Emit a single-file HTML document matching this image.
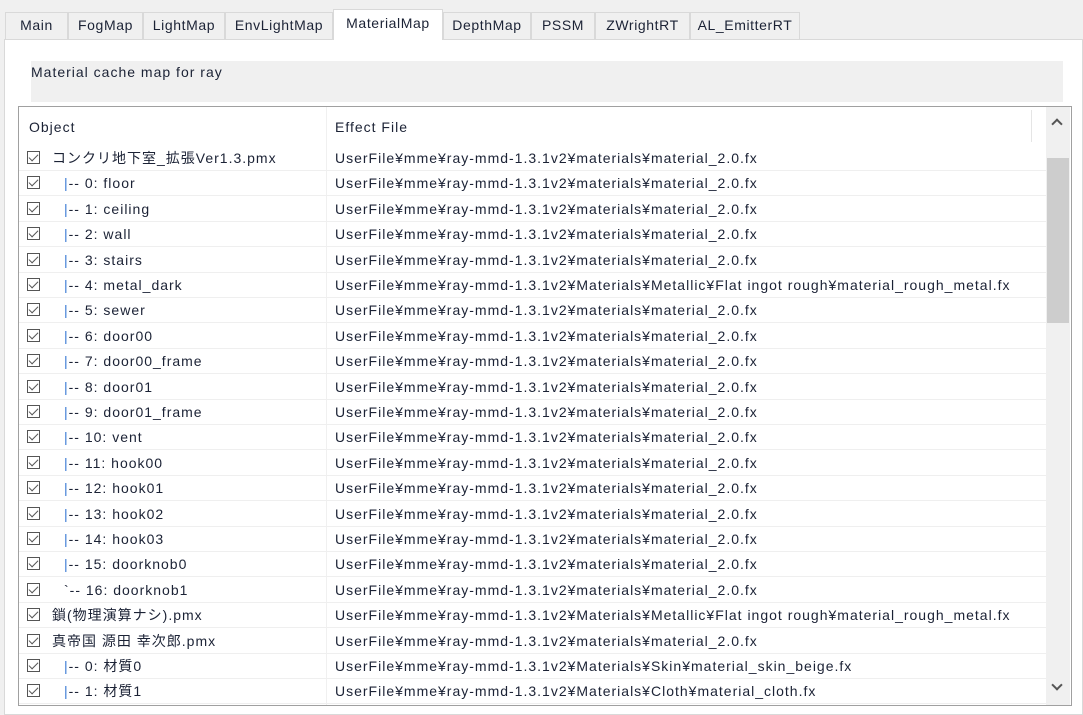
<!DOCTYPE html>
<html><head><meta charset="utf-8"><style>
body{margin:0;width:1083px;height:715px;background:#f0f0f0;font-family:"Liberation Sans","Noto Sans CJK JP",sans-serif;font-size:14px;letter-spacing:1px;color:#1b2235;position:relative;overflow:hidden}
.tab{position:absolute;top:12px;height:27px;border:1px solid #d9d9d9;border-bottom:none;background:#f0f0f0;box-sizing:border-box;line-height:25px;text-align:center;letter-spacing:0.6px}
.tab.sel{top:9px;height:31px;background:#fff;border-color:#d9d9d9;z-index:2;line-height:27px}
#pane{position:absolute;left:4px;top:39px;width:1079px;height:676px;background:#fff;border:1px solid #d9d9d9;box-sizing:border-box}
#lbl{position:absolute;left:31px;top:61px;width:1032px;height:41px;background:#f0f0f0;padding:3px 0 0 0;box-sizing:border-box}
#tbl{position:absolute;left:18px;top:106px;width:1054px;height:600px;border:1px solid #a0a0a0;box-sizing:border-box;background:#fff;overflow:hidden}
.hdr{position:absolute;top:0;height:38px;line-height:40px}
.row{position:absolute;left:0;width:1027px;height:25px;border-bottom:1px solid #efefef;box-sizing:border-box}
.cb{position:absolute;left:8px;top:5px;width:13px;height:13px;border:1px solid #555;box-sizing:border-box;background:#fff}
.cb:after{content:"";position:absolute;left:3px;top:0px;width:4px;height:8px;border-right:1.5px solid #555;border-bottom:1.5px solid #555;transform:rotate(45deg)}
.o{position:absolute;left:45px;top:3px;white-space:nowrap;line-height:18px;height:18px}
.o.top{left:33px}
.e{position:absolute;left:316px;top:3px;white-space:nowrap;line-height:18px}
.vl{position:absolute;left:307px;top:0;width:1px;height:600px;background:#f0f0f0}
#sb{position:absolute;left:1027px;top:0;width:24px;height:598px;background:#f0f0f0}
#thumb{position:absolute;left:1px;top:51px;width:22px;height:165px;background:#cdcdcd}
.t{color:#3a7bd5}
</style></head><body>
<div id="pane"></div>
<div class="tab" style="left:5px;width:63px">Main</div>
<div class="tab" style="left:68px;width:75px">FogMap</div>
<div class="tab" style="left:143px;width:82px">LightMap</div>
<div class="tab" style="left:225px;width:108px">EnvLightMap</div>
<div class="tab sel" style="left:333px;width:110px">MaterialMap</div>
<div class="tab" style="left:443px;width:88px">DepthMap</div>
<div class="tab" style="left:531px;width:64px">PSSM</div>
<div class="tab" style="left:595px;width:95px">ZWrightRT</div>
<div class="tab" style="left:690px;width:110px">AL_EmitterRT</div>
<div id="lbl">Material cache map for ray</div>
<div id="tbl">
<div class="vl"></div>
<div class="hdr" style="left:10px">Object</div>
<div class="hdr" style="left:316px">Effect File</div>
<div style="position:absolute;left:1012px;top:3px;width:1px;height:32px;background:#e5e5e5"></div>
<div id="sb"><div style="position:absolute;left:7px;top:13px;width:6px;height:6px;border-left:2px solid #555;border-top:2px solid #555;transform:rotate(45deg)"></div><div id="thumb"></div><div style="position:absolute;left:7px;top:574px;width:6px;height:6px;border-right:2px solid #555;border-bottom:2px solid #555;transform:rotate(45deg)"></div></div>
<div class="row" style="top:39px"><div class="cb"></div><div class="o top">コンクリ地下室_拡張Ver1.3.pmx</div><div class="e">UserFile¥mme¥ray-mmd-1.3.1v2¥materials¥material_2.0.fx</div></div>
<div class="row" style="top:64px"><div class="cb"></div><div class="o"><span class="t">|</span>-- 0: floor</div><div class="e">UserFile¥mme¥ray-mmd-1.3.1v2¥materials¥material_2.0.fx</div></div>
<div class="row" style="top:90px"><div class="cb"></div><div class="o"><span class="t">|</span>-- 1: ceiling</div><div class="e">UserFile¥mme¥ray-mmd-1.3.1v2¥materials¥material_2.0.fx</div></div>
<div class="row" style="top:115px"><div class="cb"></div><div class="o"><span class="t">|</span>-- 2: wall</div><div class="e">UserFile¥mme¥ray-mmd-1.3.1v2¥materials¥material_2.0.fx</div></div>
<div class="row" style="top:141px"><div class="cb"></div><div class="o"><span class="t">|</span>-- 3: stairs</div><div class="e">UserFile¥mme¥ray-mmd-1.3.1v2¥materials¥material_2.0.fx</div></div>
<div class="row" style="top:166px"><div class="cb"></div><div class="o"><span class="t">|</span>-- 4: metal_dark</div><div class="e">UserFile¥mme¥ray-mmd-1.3.1v2¥Materials¥Metallic¥Flat ingot rough¥material_rough_metal.fx</div></div>
<div class="row" style="top:191px"><div class="cb"></div><div class="o"><span class="t">|</span>-- 5: sewer</div><div class="e">UserFile¥mme¥ray-mmd-1.3.1v2¥materials¥material_2.0.fx</div></div>
<div class="row" style="top:217px"><div class="cb"></div><div class="o"><span class="t">|</span>-- 6: door00</div><div class="e">UserFile¥mme¥ray-mmd-1.3.1v2¥materials¥material_2.0.fx</div></div>
<div class="row" style="top:242px"><div class="cb"></div><div class="o"><span class="t">|</span>-- 7: door00_frame</div><div class="e">UserFile¥mme¥ray-mmd-1.3.1v2¥materials¥material_2.0.fx</div></div>
<div class="row" style="top:268px"><div class="cb"></div><div class="o"><span class="t">|</span>-- 8: door01</div><div class="e">UserFile¥mme¥ray-mmd-1.3.1v2¥materials¥material_2.0.fx</div></div>
<div class="row" style="top:293px"><div class="cb"></div><div class="o"><span class="t">|</span>-- 9: door01_frame</div><div class="e">UserFile¥mme¥ray-mmd-1.3.1v2¥materials¥material_2.0.fx</div></div>
<div class="row" style="top:318px"><div class="cb"></div><div class="o"><span class="t">|</span>-- 10: vent</div><div class="e">UserFile¥mme¥ray-mmd-1.3.1v2¥materials¥material_2.0.fx</div></div>
<div class="row" style="top:344px"><div class="cb"></div><div class="o"><span class="t">|</span>-- 11: hook00</div><div class="e">UserFile¥mme¥ray-mmd-1.3.1v2¥materials¥material_2.0.fx</div></div>
<div class="row" style="top:369px"><div class="cb"></div><div class="o"><span class="t">|</span>-- 12: hook01</div><div class="e">UserFile¥mme¥ray-mmd-1.3.1v2¥materials¥material_2.0.fx</div></div>
<div class="row" style="top:395px"><div class="cb"></div><div class="o"><span class="t">|</span>-- 13: hook02</div><div class="e">UserFile¥mme¥ray-mmd-1.3.1v2¥materials¥material_2.0.fx</div></div>
<div class="row" style="top:420px"><div class="cb"></div><div class="o"><span class="t">|</span>-- 14: hook03</div><div class="e">UserFile¥mme¥ray-mmd-1.3.1v2¥materials¥material_2.0.fx</div></div>
<div class="row" style="top:445px"><div class="cb"></div><div class="o"><span class="t">|</span>-- 15: doorknob0</div><div class="e">UserFile¥mme¥ray-mmd-1.3.1v2¥materials¥material_2.0.fx</div></div>
<div class="row" style="top:471px"><div class="cb"></div><div class="o">`-- 16: doorknob1</div><div class="e">UserFile¥mme¥ray-mmd-1.3.1v2¥materials¥material_2.0.fx</div></div>
<div class="row" style="top:496px"><div class="cb"></div><div class="o top">鎖(物理演算ナシ).pmx</div><div class="e">UserFile¥mme¥ray-mmd-1.3.1v2¥Materials¥Metallic¥Flat ingot rough¥material_rough_metal.fx</div></div>
<div class="row" style="top:522px"><div class="cb"></div><div class="o top">真帝国 源田 幸次郎.pmx</div><div class="e">UserFile¥mme¥ray-mmd-1.3.1v2¥materials¥material_2.0.fx</div></div>
<div class="row" style="top:547px"><div class="cb"></div><div class="o"><span class="t">|</span>-- 0: 材質0</div><div class="e">UserFile¥mme¥ray-mmd-1.3.1v2¥Materials¥Skin¥material_skin_beige.fx</div></div>
<div class="row" style="top:572px"><div class="cb"></div><div class="o"><span class="t">|</span>-- 1: 材質1</div><div class="e">UserFile¥mme¥ray-mmd-1.3.1v2¥Materials¥Cloth¥material_cloth.fx</div></div>
</div>
</body></html>
